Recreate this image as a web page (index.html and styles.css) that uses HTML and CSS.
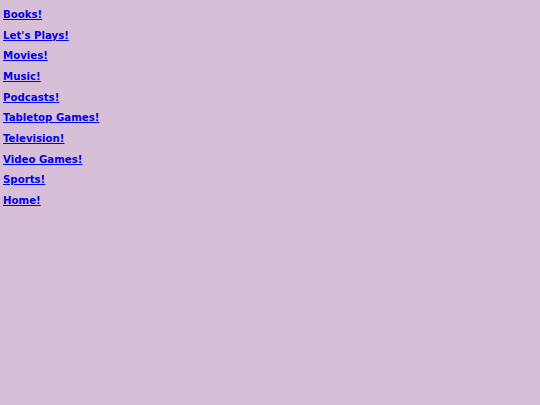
FILE: index.html
```html
<!DOCTYPE html>
<html>
<head>
<meta charset="utf-8">
<link rel="stylesheet" href="styles.css">
</head>
<body>
<nav class="menu">
<a class="item" href="#">Books!</a>
<a class="item" href="#">Let's Plays!</a>
<a class="item" href="#">Movies!</a>
<a class="item" href="#">Music!</a>
<a class="item" href="#">Podcasts!</a>
<a class="item" href="#">Tabletop Games!</a>
<a class="item" href="#">Television!</a>
<a class="item" href="#">Video Games!</a>
<a class="item" href="#">Sports!</a>
<a class="item" href="#">Home!</a>
</nav>
</body>
</html>
```
FILE: styles.css
```css
html, body {
  margin: 0;
  padding: 0;
  background: #d8bfd8;
  height: 100%;
}
.menu {
  display: flex;
  flex-direction: column;
  align-items: flex-start;
  padding: 5px 3px;
}
.item {
  font-family: "DejaVu Sans", sans-serif;
  font-weight: bold;
  font-size: 10.2px;
  line-height: 20.67px;
  color: #0000ee;
  text-decoration: underline;
}
```
